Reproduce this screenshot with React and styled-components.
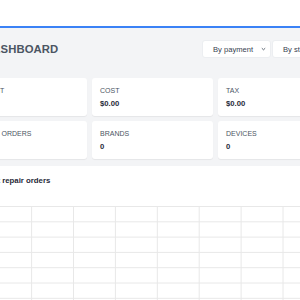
import styled, { createGlobalStyle } from "styled-components";

const GlobalStyle = createGlobalStyle`
  html, body {
    margin: 0;
    padding: 0;
    overflow: hidden;
    background: #f3f4f6;
    font-family: "Liberation Sans", Arial, sans-serif;
  }
`;

const TopBar = styled.div`
  height: 26px;
  background: #ffffff;
  border-bottom: 2px solid #3b82f6;
`;

const Page = styled.main`
  width: 498px;
  margin-left: -34px;
`;

const Header = styled.header`
  display: flex;
  align-items: center;
  justify-content: space-between;
  width: 370px;
  height: 18px;
  margin-top: 12px;
  padding-left: 18px;
  box-sizing: border-box;
`;

const Title = styled.h1`
  margin: 0;
  font-size: 11.3px;
  font-weight: 700;
  color: #4b5563;
  letter-spacing: 0.1px;
`;

const Filters = styled.div`
  display: flex;
  gap: 1px;
`;

const Select = styled.div`
  display: flex;
  align-items: center;
  justify-content: space-between;
  width: ${(p) => p.$w}px;
  height: 18px;
  padding: 0 3px 0 10px;
  box-sizing: border-box;
  background: #ffffff;
  border: 1px solid #eceef1;
  border-radius: 3px;
  font-size: 7.6px;
  color: #374151;
`;

const Chevron = styled.svg`
  width: 5px;
  height: 4px;
  margin-right: 1px;
`;

const Cards = styled.section`
  display: grid;
  grid-template-columns: repeat(4, 121px);
  grid-auto-rows: 38px;
  gap: 5px;
  margin-top: 20px;
`;

const Card = styled.div`
  display: flex;
  flex-direction: column;
  gap: 4.5px;
  padding: 9px 8px 0;
  background: #ffffff;
  border-radius: 3px;
  box-shadow: 0 1px 1px rgba(0, 0, 0, 0.06);
`;

const Label = styled.span`
  font-size: 7px;
  line-height: 1.15;
  color: #4b5563;
  text-transform: uppercase;
`;

const Value = styled.span`
  font-size: 7.7px;
  line-height: 1.15;
  font-weight: 700;
  color: #1f2937;
`;

const Panel = styled.section`
  margin-top: 7px;
  padding: 10.5px 8px 0;
  background: #ffffff;
  height: 200px;
`;

const PanelTitle = styled.h2`
  margin: 0;
  font-size: 7.8px;
  line-height: 1.15;
  font-weight: 700;
  color: #1f2937;
`;

const Chart = styled.svg`
  display: block;
  margin-top: 20.5px;
`;

const stats = [
  ["Amount", "$0.00"],
  ["Cost", "$0.00"],
  ["Tax", "$0.00"],
  ["Revenue", "$0.00"],
  ["Repair orders", "0"],
  ["Brands", "0"],
  ["Devices", "0"],
  ["Customers", "0"],
];

const ChevronIcon = () => (
  <Chevron viewBox="0 0 5 4">
    <path d="M0.8 1.2 L2.5 2.8 L4.2 1.2" fill="none" stroke="#4b5563" strokeWidth="0.9" />
  </Chevron>
);

const GridChart = () => {
  const w = 482;
  const rows = Array.from({ length: 8 }, (_, i) => 0.5 + i * 15.3);
  const cols = Array.from({ length: 12 }, (_, i) => 15.7 + i * 41.9);
  return (
    <Chart width={w} height={110}>
      {rows.map((y) => (
        <line key={y} x1="0" x2={w} y1={y} y2={y} stroke="#e8e8e8" strokeWidth="1" />
      ))}
      {cols.map((x) => (
        <line key={x} x1={x} x2={x} y1="0" y2="110" stroke="#e8e8e8" strokeWidth="1" />
      ))}
    </Chart>
  );
};

export default function App() {
  return (
    <>
      <GlobalStyle />
      <TopBar />
      <Page>
        <Header>
          <Title>DASHBOARD</Title>
          <Filters>
            <Select $w={69}>
              By payment
              <ChevronIcon />
            </Select>
            <Select $w={64}>
              By status
              <ChevronIcon />
            </Select>
          </Filters>
        </Header>
        <Cards>
          {stats.map(([label, value]) => (
            <Card key={label}>
              <Label>{label}</Label>
              <Value>{value}</Value>
            </Card>
          ))}
        </Cards>
        <Panel>
          <PanelTitle>Recent repair orders</PanelTitle>
          <GridChart />
        </Panel>
      </Page>
    </>
  );
}
